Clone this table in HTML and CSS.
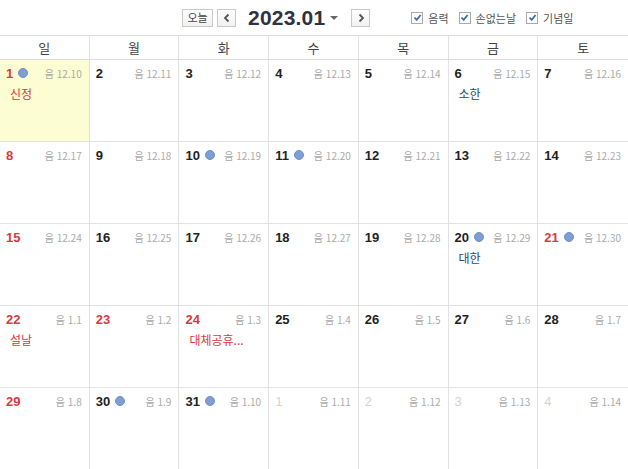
FILE: index.html
```html
<!DOCTYPE html>
<html lang="ko">
<head>
<meta charset="utf-8">
<link rel="stylesheet" href="styles.css">
</head>
<body>
<div class="toolbar">
  <div class="nav">
    <button class="btn today">오늘</button>
    <button class="btn arrow"><svg width="8" height="10" viewBox="0 0 8 10"><path d="M5.5 1.5 L2 5 L5.5 8.5" fill="none" stroke="#555" stroke-width="1.8"/></svg></button>
    <span class="title">2023.01</span>
    <span class="caret"></span>
    <button class="btn arrow"><svg width="8" height="10" viewBox="0 0 8 10"><path d="M2.5 1.5 L6 5 L2.5 8.5" fill="none" stroke="#555" stroke-width="1.8"/></svg></button>
  </div>
  <div class="checks">
    <label class="chk"><span class="box"><svg width="9" height="9" viewBox="0 0 9 9"><path d="M1.5 4.5 L3.7 6.8 L7.6 2" fill="none" stroke="#3b6fb0" stroke-width="1.8"/></svg></span>음력</label>
    <label class="chk"><span class="box"><svg width="9" height="9" viewBox="0 0 9 9"><path d="M1.5 4.5 L3.7 6.8 L7.6 2" fill="none" stroke="#3b6fb0" stroke-width="1.8"/></svg></span>손없는날</label>
    <label class="chk"><span class="box"><svg width="9" height="9" viewBox="0 0 9 9"><path d="M1.5 4.5 L3.7 6.8 L7.6 2" fill="none" stroke="#3b6fb0" stroke-width="1.8"/></svg></span>기념일</label>
  </div>
</div>
<div class="cal">
  <div class="head">
    <div>일</div><div>월</div><div>화</div><div>수</div><div>목</div><div>금</div><div>토</div>
  </div>
  <div class="grid">
    <div class="cell todaycell"><div class="top"><span class="d red">1</span><span class="dot"></span><span class="lun">음 12.10</span></div><div class="ev red">신정</div></div>
    <div class="cell"><div class="top"><span class="d">2</span><span class="lun">음 12.11</span></div></div>
    <div class="cell"><div class="top"><span class="d">3</span><span class="lun">음 12.12</span></div></div>
    <div class="cell"><div class="top"><span class="d">4</span><span class="lun">음 12.13</span></div></div>
    <div class="cell"><div class="top"><span class="d">5</span><span class="lun">음 12.14</span></div></div>
    <div class="cell"><div class="top"><span class="d">6</span><span class="lun">음 12.15</span></div><div class="ev blue">소한</div></div>
    <div class="cell last"><div class="top"><span class="d">7</span><span class="lun">음 12.16</span></div></div>

    <div class="cell"><div class="top"><span class="d red">8</span><span class="lun">음 12.17</span></div></div>
    <div class="cell"><div class="top"><span class="d">9</span><span class="lun">음 12.18</span></div></div>
    <div class="cell"><div class="top"><span class="d">10</span><span class="dot"></span><span class="lun">음 12.19</span></div></div>
    <div class="cell"><div class="top"><span class="d">11</span><span class="dot"></span><span class="lun">음 12.20</span></div></div>
    <div class="cell"><div class="top"><span class="d">12</span><span class="lun">음 12.21</span></div></div>
    <div class="cell"><div class="top"><span class="d">13</span><span class="lun">음 12.22</span></div></div>
    <div class="cell last"><div class="top"><span class="d">14</span><span class="lun">음 12.23</span></div></div>

    <div class="cell"><div class="top"><span class="d red">15</span><span class="lun">음 12.24</span></div></div>
    <div class="cell"><div class="top"><span class="d">16</span><span class="lun">음 12.25</span></div></div>
    <div class="cell"><div class="top"><span class="d">17</span><span class="lun">음 12.26</span></div></div>
    <div class="cell"><div class="top"><span class="d">18</span><span class="lun">음 12.27</span></div></div>
    <div class="cell"><div class="top"><span class="d">19</span><span class="lun">음 12.28</span></div></div>
    <div class="cell"><div class="top"><span class="d">20</span><span class="dot"></span><span class="lun">음 12.29</span></div><div class="ev blue">대한</div></div>
    <div class="cell last"><div class="top"><span class="d red">21</span><span class="dot"></span><span class="lun">음 12.30</span></div></div>

    <div class="cell"><div class="top"><span class="d red">22</span><span class="lun">음 1.1</span></div><div class="ev red">설날</div></div>
    <div class="cell"><div class="top"><span class="d red">23</span><span class="lun">음 1.2</span></div></div>
    <div class="cell"><div class="top"><span class="d red">24</span><span class="lun">음 1.3</span></div><div class="ev red">대체공휴...</div></div>
    <div class="cell"><div class="top"><span class="d">25</span><span class="lun">음 1.4</span></div></div>
    <div class="cell"><div class="top"><span class="d">26</span><span class="lun">음 1.5</span></div></div>
    <div class="cell"><div class="top"><span class="d">27</span><span class="lun">음 1.6</span></div></div>
    <div class="cell last"><div class="top"><span class="d">28</span><span class="lun">음 1.7</span></div></div>

    <div class="cell"><div class="top"><span class="d red">29</span><span class="lun">음 1.8</span></div></div>
    <div class="cell"><div class="top"><span class="d">30</span><span class="dot"></span><span class="lun">음 1.9</span></div></div>
    <div class="cell"><div class="top"><span class="d">31</span><span class="dot"></span><span class="lun">음 1.10</span></div></div>
    <div class="cell"><div class="top"><span class="d other">1</span><span class="lun">음 1.11</span></div></div>
    <div class="cell"><div class="top"><span class="d other">2</span><span class="lun">음 1.12</span></div></div>
    <div class="cell"><div class="top"><span class="d other">3</span><span class="lun">음 1.13</span></div></div>
    <div class="cell last"><div class="top"><span class="d other">4</span><span class="lun">음 1.14</span></div></div>
  </div>
</div>
</body>
</html>
```

FILE: styles.css
```css
* { box-sizing: border-box; }
html, body { margin: 0; padding: 0; background: #fff; }
body {
  width: 628px;
  height: 469px;
  overflow: hidden;
  font-family: "Noto Sans CJK KR", "Noto Sans", sans-serif;
  color: #222;
}
.toolbar {
  height: 35px;
  display: flex;
  align-items: center;
  padding-left: 182px;
}
.nav { display: flex; align-items: center; }
.btn {
  height: 18px;
  border: 1px solid #c9c9c9;
  background: linear-gradient(#fff, #f1f1f1);
  padding: 0;
  margin: 0;
  font-family: inherit;
  display: flex;
  align-items: center;
  justify-content: center;
  color: #444;
}
.today { width: 31px; font-size: 11px; line-height: 1; }
.arrow { width: 19px; margin-left: 4px; }
.title {
  font-family: "Liberation Sans", Arial, sans-serif;
  font-weight: bold;
  font-size: 21px;
  color: #30323f;
  margin-left: 12px;
  letter-spacing: 0.2px;
}
.caret {
  width: 0; height: 0;
  border-left: 4px solid transparent;
  border-right: 4px solid transparent;
  border-top: 4px solid #666;
  margin-left: 5px;
  margin-right: 9px;
}
.checks { display: flex; align-items: center; margin-left: 41px; }
.chk {
  display: flex;
  align-items: center;
  font-size: 11px;
  color: #555;
  margin-right: 10px;
}
.box {
  width: 12px; height: 12px;
  border: 1px solid #aaa;
  background: #fff;
  display: flex;
  align-items: center;
  justify-content: center;
  margin-right: 5px;
}
.cal { border-top: 1px solid #dcdcdc; }
.head {
  display: grid;
  grid-template-columns: repeat(7, 1fr);
  height: 24px;
  border-bottom: 1px solid #dcdcdc;
}
.head div {
  text-align: center;
  font-size: 13px;
  line-height: 23px;
  color: #444;
  border-right: 1px solid #e2e2e2;
}
.head div:last-child { border-right: none; }
.grid {
  display: grid;
  grid-template-columns: repeat(7, 1fr);
  grid-auto-rows: 82px;
}
.cell {
  border-right: 1px solid #e2e2e2;
  border-bottom: 1px solid #e2e2e2;
  padding: 5px 6px 0 6px;
}
.cell.last { border-right: none; }
.todaycell { background: #fdfdd3; }
.top { display: flex; align-items: center; height: 16px; }
.d {
  font-family: "Liberation Sans", Arial, sans-serif;
  font-weight: bold;
  font-size: 13px;
  color: #222;
}
.d.red { color: #d9393f; }
.d.other { color: #d2d2d2; font-weight: normal; }
.dot {
  width: 10px; height: 10px;
  border-radius: 50%;
  background: #7e9fd4;
  border: 1px solid #6f8fc4;
  margin-left: 5px;
}
.lun {
  margin-left: auto;
  font-size: 10px;
  color: #aaa;
  margin-right: 1px;
}
.ev {
  font-size: 12px;
  margin-top: 4px;
  padding-left: 4px;
}
.ev.red { color: #d9393f; }
.ev.blue { color: #274a7c; }
```
